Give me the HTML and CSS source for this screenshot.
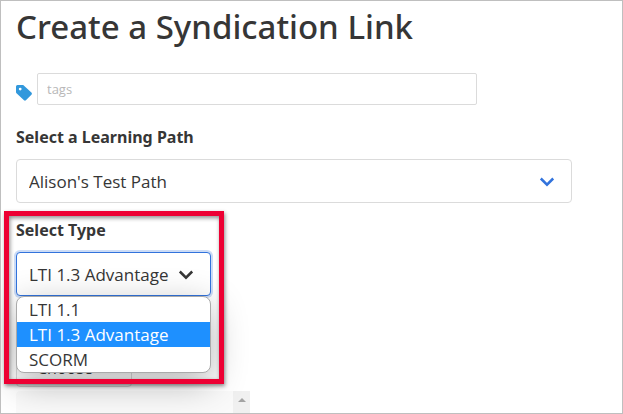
FILE: index.html
```html
<!DOCTYPE html>
<html lang="en">
<head>
    <meta charset="UTF-8">
    <meta name="viewport" content="width=device-width, initial-scale=1.0">
    <title>Create a Syndication Link</title>
    <link rel="stylesheet" href="styles.css">
</head>
<body>

    <main class="page">
        <h1 class="title">Create a Syndication Link</h1>

        <form class="link-form">
            <div class="tags-row">
                <svg class="tag-icon" viewBox="0 0 16 16" aria-hidden="true">
                    <path fill-rule="evenodd" d="M1.5 0H7.2L15.4 7.6Q16.4 8.7 15.4 9.7L9.9 15.3Q9 16.2 8 15.3L.5 8.2Q0 7.7 0 7V1.5Q0 0 1.5 0ZM4.2 2.7a1.4 1.4 0 1 0 0 2.8a1.4 1.4 0 0 0 0-2.8Z"/>
                </svg>
                <input class="tags-input" type="text" name="tags" placeholder="tags" aria-label="Tags">
            </div>

            <div class="field">
                <label class="label" for="learningPath">Select a Learning Path</label>
                <div class="select">
                    <select id="learningPath" name="learningPath">
                        <option>Alison's Test Path</option>
                    </select>
                    <svg class="chevron" viewBox="0 0 16 10" aria-hidden="true"><path d="M1.8 1.5L8 7.7l6.2-6.2"/></svg>
                </div>
            </div>

            <div class="field type-field">
                <label class="label" for="linkType">Select Type</label>
                <div class="select is-open">
                    <select id="linkType" name="linkType">
                        <option>LTI 1.1</option>
                        <option selected>LTI 1.3 Advantage</option>
                        <option>SCORM</option>
                    </select>
                    <svg class="chevron" viewBox="0 0 16 10" aria-hidden="true"><path d="M1.8 1.5L8 7.7l6.2-6.2"/></svg>
                    <ul class="menu" role="listbox" aria-label="Select Type">
                        <li class="menu-item" role="option">LTI 1.1</li>
                        <li class="menu-item is-active" role="option" aria-selected="true">LTI 1.3 Advantage</li>
                        <li class="menu-item" role="option">SCORM</li>
                    </ul>
                </div>
                <div class="highlight"></div>
            </div>

            <button class="choose-btn" type="button">Choose</button>
            <div class="list-box">
                <span class="scroll-up"></span>
            </div>
        </form>
    </main>

</body>
</html>
```

FILE: styles.css
```css
* {
    box-sizing: border-box;
}

body {
    margin: 0;
    height: 100vh;
    overflow: hidden;
    border: 1px solid #bfbfbf;
    background-color: #fff;
    color: #363636;
    font-family: "Open Sans", "Noto Sans", sans-serif;
    font-size: 17px;
    line-height: 27px;
}

.page {
    display: flex;
    flex-direction: column;
    height: 100%;
    padding: 4px 50px 0 15px;
}

.title {
    margin: 0 0 24px;
    font-family: "Noto Sans", "Open Sans", sans-serif;
    font-size: 33px;
    font-weight: 500;
    line-height: 44px;
}

.link-form {
    display: flex;
    flex: 1;
    flex-direction: column;
    min-height: 0;
}

/* Tags */
.tags-row {
    display: flex;
    align-items: center;
    gap: 5px;
    margin-bottom: 19px;
}

.tag-icon {
    width: 16px;
    height: 16px;
    margin-top: 8px;
    fill: #3298dc;
}

.tags-input {
    width: 440px;
    height: 32px;
    padding: 0 9px;
    border: 1px solid #dbdbdb;
    border-radius: 2px;
    font-family: inherit;
    font-size: 13px;
}

.tags-input::placeholder {
    color: #b8b8b8;
}

/* Fields */
.field {
    margin-bottom: 14px;
}

.label {
    display: block;
    margin-bottom: 8px;
    font-family: "Noto Sans", "Open Sans", sans-serif;
    font-size: 16px;
    font-weight: 700;
}

.select {
    position: relative;
}

.select select {
    display: block;
    width: 100%;
    height: 44px;
    padding: 0 12px;
    appearance: none;
    border: 1px solid #dbdbdb;
    border-radius: 4px;
    background-color: #fff;
    color: #363636;
    font-family: inherit;
    font-size: 17px;
}

.chevron {
    position: absolute;
    top: 18px;
    right: 17px;
    width: 16px;
    height: 10px;
    fill: none;
    stroke: #3273dc;
    stroke-width: 2.5;
}

/* Open type drop-down */
.type-field {
    position: relative;
    width: 195px;
}

.is-open select {
    border-color: #3273dc;
    box-shadow: 0 0 0 2px rgba(50, 115, 220, 0.25);
}

.is-open .chevron {
    stroke: #363636;
}

.menu {
    position: absolute;
    top: 100%;
    left: 0;
    z-index: 2;
    width: 100%;
    margin: 0;
    padding: 0;
    overflow: hidden;
    border: 1px solid #aaa;
    border-radius: 8px;
    background-color: #fff;
    box-shadow: 0 10px 36px rgba(0, 0, 0, 0.3);
    list-style: none;
}

.menu-item {
    padding: 0 12px;
    line-height: 25px;
}

.menu-item.is-active {
    background-color: #1e90ff;
    color: #fff;
}

/* Red frame around the type field */
.highlight {
    position: absolute;
    top: -6px;
    left: -12px;
    z-index: 3;
    width: 220px;
    height: 173px;
    border: 5px solid #ed0033;
    box-shadow: 1px 2px 4px rgba(0, 0, 0, 0.45), inset 1px 2px 4px rgba(0, 0, 0, 0.45);
    pointer-events: none;
}

.choose-btn {
    flex: none;
    width: 116px;
    height: 38px;
    margin: 39px 0 4px;
    padding: 0 20px;
    border: 1px solid #dbdbdb;
    border-radius: 4px;
    background-color: #fff;
    color: #363636;
    font-family: inherit;
    font-size: 16px;
    text-align: left;
}

.list-box {
    display: flex;
    flex: 1;
    justify-content: flex-end;
    width: 234px;
    min-height: 0;
    border-radius: 4px 4px 0 0;
    background-color: #fafafa;
}

.scroll-up {
    width: 17px;
    background-color: #f0f0f0;
}

.scroll-up::before {
    content: "";
    display: block;
    width: 0;
    margin: 7px auto 0;
    border: 4px solid transparent;
    border-top: 0;
    border-bottom-color: #a3a3a3;
}
```
